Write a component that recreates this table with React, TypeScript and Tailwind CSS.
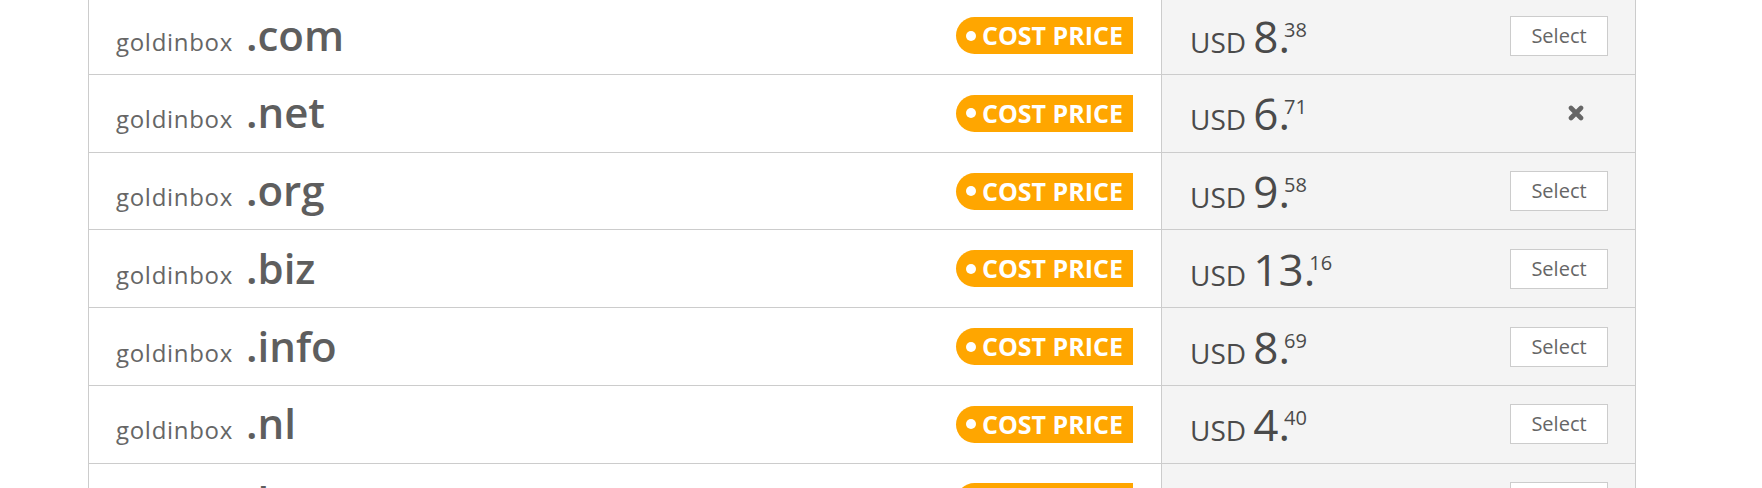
import React from "react";

type Row = {
  tld: string;
  whole: string;
  cents: string;
  selected?: boolean;
};

const rows: Row[] = [
  { tld: ".com", whole: "8", cents: "38" },
  { tld: ".net", whole: "6", cents: "71", selected: true },
  { tld: ".org", whole: "9", cents: "58" },
  { tld: ".biz", whole: "13", cents: "16" },
  { tld: ".info", whole: "8", cents: "69" },
  { tld: ".nl", whole: "4", cents: "40" },
  { tld: ".be", whole: "4", cents: "65" },
];

function CostBadge() {
  return (
    <div className="flex h-[37px] w-[177px] items-center rounded-l-full rounded-r-[3px] bg-[#ffa600] pl-[10px] text-white">
      <span className="h-[10px] w-[10px] shrink-0 rounded-full bg-white" />
      <span className="ml-[6px] text-[25px] font-bold leading-none whitespace-nowrap">COST PRICE</span>
    </div>
  );
}

function RemoveIcon() {
  return (
    <div className="flex w-[98px] justify-end pr-[24px]">
      <svg width="16" height="16" viewBox="0 0 16 16">
        <path
          d="M3 3 L13 13 M13 3 L3 13"
          stroke="#666"
          strokeWidth="4.6"
          strokeLinecap="round"
        />
      </svg>
    </div>
  );
}

export default function App() {
  return (
    <div className="h-[488px] overflow-hidden bg-white font-['Open_Sans',sans-serif] text-[#666]">
      <div className="-mt-[2.7px] ml-[88px] w-[1548px] border-x border-[#cccccc]">
        {rows.map((row, i) => (
          <div key={i} className="flex h-[77.72px] border-b border-[#cccccc]">
            <div className="flex flex-1 items-center pl-[27px] pr-[28px]">
              <div className="pb-[2px] leading-none whitespace-nowrap">
                <span className="text-[24px] tracking-[0.7px]">goldinbox</span>
                <span className="ml-[13px] text-[42px] font-semibold text-[#5e5e5e]">{row.tld}</span>
              </div>
              <div className="ml-auto">
                <CostBadge />
              </div>
            </div>
            <div className="flex w-[474px] items-center border-l border-[#cccccc] bg-[#f4f4f4] pl-[28px] pr-[27px]">
              <div className="leading-none whitespace-nowrap text-[#4a4a4a]">
                <span className="text-[28px]">USD </span>
                <span className="text-[44px]">{row.whole}.</span>
                <span className="ml-[-6px] align-[16px] text-[20px]">{row.cents}</span>
              </div>
              <div className="ml-auto">
                {row.selected ? (
                  <RemoveIcon />
                ) : (
                  <button className="h-[40px] w-[98px] border border-[#cccccc] bg-white text-[20px] text-[#666]">
                    Select
                  </button>
                )}
              </div>
            </div>
          </div>
        ))}
      </div>
    </div>
  );
}
